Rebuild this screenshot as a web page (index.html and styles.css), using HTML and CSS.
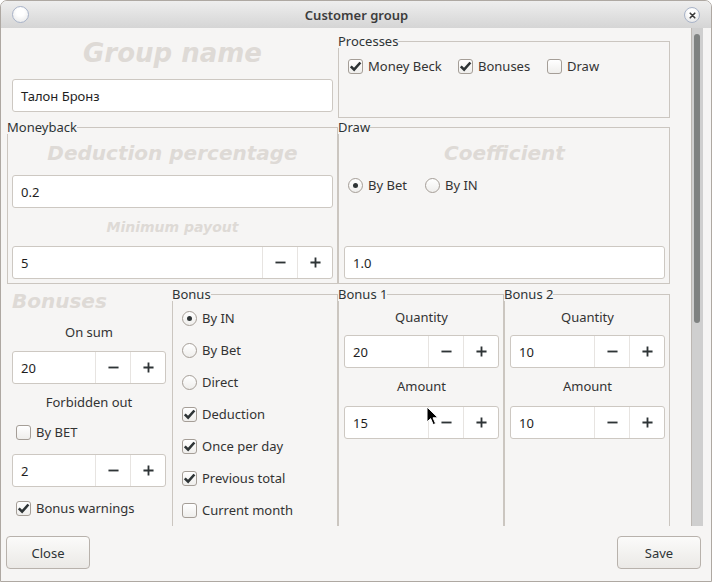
FILE: index.html
```html
<!DOCTYPE html>
<html>
<head>
<meta charset="utf-8">
<title>Customer group</title>
<link rel="stylesheet" href="styles.css">
</head>
<body>
<div class="window">
  <header class="titlebar">
    <span class="tb-dot"></span>
    <span class="tb-title">Customer group</span>
    <span class="tb-close"><svg width="16" height="16" viewBox="0 0 16 16"><path d="M5.2 5.2l5.6 5.6M10.8 5.2l-5.6 5.6" stroke="#3a3a3a" stroke-width="2" stroke-linecap="round"/></svg></span>
  </header>

  <div class="main">
    <div class="content">
      <div class="row row1">
        <div class="namecell">
          <div class="big big-lg">Group name</div>
          <div class="field">Талон Бронз</div>
        </div>
        <fieldset class="box processes">
          <legend>Processes</legend>
          <div class="proc-items">
            <div class="opt"><span class="cb"><svg width="13" height="13" viewBox="0 0 13 13"><path d="M1.8 6.4l3.3 3.3 6.3-7.2" fill="none" stroke="#2e3436" stroke-width="2.6"/></svg></span>Money Beck</div>
            <div class="opt"><span class="cb"><svg width="13" height="13" viewBox="0 0 13 13"><path d="M1.8 6.4l3.3 3.3 6.3-7.2" fill="none" stroke="#2e3436" stroke-width="2.6"/></svg></span>Bonuses</div>
            <div class="opt"><span class="cb"></span>Draw</div>
          </div>
        </fieldset>
      </div>

      <div class="row row2">
        <fieldset class="box moneyback">
          <legend>Moneyback</legend>
          <div class="mb-body">
            <div class="big big-md">Deduction percentage</div>
            <div class="field">0.2</div>
            <div class="big big-sm">Minimum payout</div>
            <div class="spin">
              <span class="val">5</span>
              <span class="sbtn"><svg width="12" height="12" viewBox="0 0 12 12"><path d="M0.5 6h11" stroke="#2e3436" stroke-width="2"/></svg></span>
              <span class="sbtn"><svg width="12" height="12" viewBox="0 0 12 12"><path d="M0.5 6h11M6 0.5v11" stroke="#2e3436" stroke-width="2"/></svg></span>
            </div>
          </div>
        </fieldset>
        <fieldset class="box draw">
          <legend>Draw</legend>
          <div class="draw-body">
            <div class="big big-md">Coefficient</div>
            <div class="radio-row">
              <div class="opt"><span class="rb on"></span>By Bet</div>
              <div class="opt"><span class="rb"></span>By IN</div>
            </div>
            <div class="field">1.0</div>
          </div>
        </fieldset>
      </div>

      <div class="row row3">
        <div class="bonuses">
          <div class="big big-md big-left">Bonuses</div>
          <div class="lbl lbl-a">On sum</div>
          <div class="spin spin-a">
            <span class="val">20</span>
            <span class="sbtn"><svg width="12" height="12" viewBox="0 0 12 12"><path d="M0.5 6h11" stroke="#2e3436" stroke-width="2"/></svg></span>
            <span class="sbtn"><svg width="12" height="12" viewBox="0 0 12 12"><path d="M0.5 6h11M6 0.5v11" stroke="#2e3436" stroke-width="2"/></svg></span>
          </div>
          <div class="lbl lbl-b">Forbidden out</div>
          <div class="opt opt-b"><span class="cb"></span>By BET</div>
          <div class="spin spin-b">
            <span class="val">2</span>
            <span class="sbtn"><svg width="12" height="12" viewBox="0 0 12 12"><path d="M0.5 6h11" stroke="#2e3436" stroke-width="2"/></svg></span>
            <span class="sbtn"><svg width="12" height="12" viewBox="0 0 12 12"><path d="M0.5 6h11M6 0.5v11" stroke="#2e3436" stroke-width="2"/></svg></span>
          </div>
          <div class="opt opt-b"><span class="cb"><svg width="13" height="13" viewBox="0 0 13 13"><path d="M1.8 6.4l3.3 3.3 6.3-7.2" fill="none" stroke="#2e3436" stroke-width="2.6"/></svg></span>Bonus warnings</div>
        </div>

        <fieldset class="box tall">
          <legend>Bonus</legend>
          <div class="bonus-body">
            <div class="opt"><span class="rb on"></span>By IN</div>
            <div class="opt"><span class="rb"></span>By Bet</div>
            <div class="opt"><span class="rb"></span>Direct</div>
            <div class="opt"><span class="cb"><svg width="13" height="13" viewBox="0 0 13 13"><path d="M1.8 6.4l3.3 3.3 6.3-7.2" fill="none" stroke="#2e3436" stroke-width="2.6"/></svg></span>Deduction</div>
            <div class="opt"><span class="cb"><svg width="13" height="13" viewBox="0 0 13 13"><path d="M1.8 6.4l3.3 3.3 6.3-7.2" fill="none" stroke="#2e3436" stroke-width="2.6"/></svg></span>Once per day</div>
            <div class="opt"><span class="cb"><svg width="13" height="13" viewBox="0 0 13 13"><path d="M1.8 6.4l3.3 3.3 6.3-7.2" fill="none" stroke="#2e3436" stroke-width="2.6"/></svg></span>Previous total</div>
            <div class="opt"><span class="cb"></span>Current month</div>
          </div>
        </fieldset>

        <fieldset class="box tall">
          <legend>Bonus 1</legend>
          <div class="bn-body">
            <div class="lbl lbl-q">Quantity</div>
            <div class="spin spin-q">
              <span class="val">20</span>
              <span class="sbtn"><svg width="12" height="12" viewBox="0 0 12 12"><path d="M0.5 6h11" stroke="#2e3436" stroke-width="2"/></svg></span>
              <span class="sbtn"><svg width="12" height="12" viewBox="0 0 12 12"><path d="M0.5 6h11M6 0.5v11" stroke="#2e3436" stroke-width="2"/></svg></span>
            </div>
            <div class="lbl lbl-am">Amount</div>
            <div class="spin spin-am">
              <span class="val">15</span>
              <span class="sbtn"><svg width="12" height="12" viewBox="0 0 12 12"><path d="M0.5 6h11" stroke="#2e3436" stroke-width="2"/></svg></span>
              <span class="sbtn"><svg width="12" height="12" viewBox="0 0 12 12"><path d="M0.5 6h11M6 0.5v11" stroke="#2e3436" stroke-width="2"/></svg></span>
            </div>
          </div>
        </fieldset>

        <fieldset class="box tall">
          <legend>Bonus 2</legend>
          <div class="bn-body">
            <div class="lbl lbl-q">Quantity</div>
            <div class="spin spin-q">
              <span class="val">10</span>
              <span class="sbtn"><svg width="12" height="12" viewBox="0 0 12 12"><path d="M0.5 6h11" stroke="#2e3436" stroke-width="2"/></svg></span>
              <span class="sbtn"><svg width="12" height="12" viewBox="0 0 12 12"><path d="M0.5 6h11M6 0.5v11" stroke="#2e3436" stroke-width="2"/></svg></span>
            </div>
            <div class="lbl lbl-am">Amount</div>
            <div class="spin spin-am">
              <span class="val">10</span>
              <span class="sbtn"><svg width="12" height="12" viewBox="0 0 12 12"><path d="M0.5 6h11" stroke="#2e3436" stroke-width="2"/></svg></span>
              <span class="sbtn"><svg width="12" height="12" viewBox="0 0 12 12"><path d="M0.5 6h11M6 0.5v11" stroke="#2e3436" stroke-width="2"/></svg></span>
            </div>
          </div>
        </fieldset>
      </div>
    </div>
    <div class="scrollbar"><div class="thumb"></div></div>
  </div>

  <footer class="footer">
    <button class="btn">Close</button>
    <button class="btn">Save</button>
  </footer>

  <svg class="cursor" width="13" height="20" viewBox="0 0 13 20"><path d="M1 1v15l3.6-3.4 2.6 6 2.4-1-2.6-5.8h5z" fill="#000" stroke="#fff" stroke-width="1"/></svg>
</div>
</body>
</html>
```

FILE: styles.css
```css
* { box-sizing: border-box; }
html, body { margin: 0; padding: 0; }
body {
  width: 712px;
  height: 582px;
  background: #ffffff;
  font-family: "Noto Sans", "Open Sans", sans-serif;
  font-size: 13px;
  color: #333333;
  overflow: hidden;
}

.window {
  position: relative;
  width: 712px;
  height: 582px;
  border: 1px solid #aea8a2;
  border-radius: 7px 7px 0 0;
  background: #f6f5f4;
  display: flex;
  flex-direction: column;
  overflow: hidden;
}

/* title bar */
.titlebar {
  height: 27px;
  flex: none;
  display: flex;
  align-items: center;
  background: linear-gradient(#eeeeee, #d5d5d5);
  padding: 0 11px 0 11px;
}
.tb-dot {
  width: 17px;
  height: 17px;
  border-radius: 50%;
  border: 1.5px solid #a8b3c8;
  background: radial-gradient(circle at 50% 35%, #ffffff 30%, #e4e4e4 100%);
}
.tb-title {
  flex: 1;
  text-align: center;
  font-weight: 600;
  font-size: 13px;
  color: #3c3c3c;
}
.tb-close {
  width: 16px;
  height: 16px;
  border-radius: 50%;
  border: 1.5px solid #a8b3c8;
  background: radial-gradient(circle at 50% 35%, #ffffff 30%, #dedede 100%);
  display: flex;
  align-items: center;
  justify-content: center;
  margin-top: 1px;
}
.tb-close svg { width: 13px; height: 13px; }

/* main area */
.main {
  display: flex;
  height: 498px;
  flex: none;
}
.content {
  width: 690px;
  height: 498px;
  overflow: hidden;
  flex: none;
}
.scrollbar {
  width: 12px;
  flex: none;
  background: #cfcfcf;
  border-left: 1px solid #bcb7b2;
  padding: 6px 2px 0 2px;
}
.thumb {
  width: 6px;
  height: 289px;
  border-radius: 3px;
  background: #7f8281;
}

/* generic widgets */
.row { display: grid; }
.box {
  border: 1px solid #cbc6c0;
  margin: 0;
  padding: 0;
  min-width: 0;
}
legend {
  padding: 0;
  margin-left: -1px;
  font-size: 13px;
  line-height: 14px;
  color: #2e3436;
}
.big {
  font-family: "DejaVu Sans", "Liberation Sans", sans-serif;
  font-weight: bold;
  font-style: italic;
  color: #dedad6;
  text-align: center;
  white-space: nowrap;
}
.big-lg { font-size: 26px; line-height: 30px; }
.big-md { font-size: 20px; line-height: 24px; }
.big-sm { font-size: 14px; line-height: 18px; }

.field {
  height: 33px;
  background: #ffffff;
  border: 1px solid #cdc8c2;
  border-radius: 3px;
  padding: 0 8px;
  display: flex;
  align-items: center;
  color: #1e1e1e;
  flex: none;
}
.spin {
  height: 33px;
  background: #ffffff;
  border: 1px solid #cdc8c2;
  border-radius: 3px;
  display: flex;
  flex: none;
  color: #1e1e1e;
}
.spin .val {
  flex: 1;
  padding-left: 8px;
  display: flex;
  align-items: center;
}
.spin .sbtn {
  width: 35px;
  border-left: 1px solid #e7e4e1;
  display: flex;
  align-items: center;
  justify-content: center;
}
.spin .sbtn svg { width: 11px; height: 11px; }

.opt {
  display: flex;
  align-items: center;
  gap: 5px;
  height: 17px;
  line-height: 17px;
  white-space: nowrap;
  color: #333333;
}
.cb {
  width: 15px;
  height: 15px;
  flex: none;
  border: 1px solid #a59e97;
  border-radius: 3px;
  background: linear-gradient(#ffffff, #efeeec);
  display: flex;
  align-items: center;
  justify-content: center;
}
.rb {
  width: 15px;
  height: 15px;
  flex: none;
  border: 1px solid #a59e97;
  border-radius: 50%;
  background: linear-gradient(#ffffff, #efeeec);
  display: flex;
  align-items: center;
  justify-content: center;
}
.rb.on::after {
  content: "";
  width: 5px;
  height: 5px;
  border-radius: 50%;
  background: #2e3436;
}
.lbl {
  text-align: center;
  line-height: 17px;
  color: #333333;
}

/* row 1 */
.row1 {
  grid-template-columns: 337px 332px;
  height: 92px;
}
.namecell {
  padding: 10px 5px 0 11px;
  display: flex;
  flex-direction: column;
}
.namecell .field { margin-top: 11px; }
.processes { margin: 6px 0 2px 0; }
.proc-items {
  display: grid;
  grid-template-columns: 110px 89px auto;
  padding: 10px 0 0 9px;
}

/* row 2 */
.row2 {
  grid-template-columns: 337px 332px;
  height: 165px;
}
.moneyback { margin: 0 0 1px 6px; }
.draw { margin: 0 0 1px 0; }
.mb-body {
  padding: 0 4px;
  display: flex;
  flex-direction: column;
}
.mb-body .big-md { margin-top: 7px; }
.mb-body .field { margin-top: 10px; }
.mb-body .big-sm { margin-top: 10px; }
.mb-body .spin { margin-top: 10px; }
.draw-body {
  padding: 0 4px 0 5px;
  display: flex;
  flex-direction: column;
}
.draw-body .big-md { margin-top: 7px; }
.radio-row {
  display: grid;
  grid-template-columns: 77px auto;
  margin-top: 12px;
  padding-left: 4px;
}
.draw-body .field { margin-top: 52px; }

/* row 3 */
.row3 {
  grid-template-columns: 171px 166px 166px 166px;
  height: 262px;
}
.bonuses {
  padding: 4px 6px 0 11px;
  display: flex;
  flex-direction: column;
}
.big-left { text-align: left; }
.lbl-a { margin-top: 11px; }
.spin-a { margin-top: 10px; }
.lbl-b { margin-top: 10px; }
.opt-b { margin: 13px 0 0 4px; }
.spin-b { margin-top: 13px; }
.tall { margin: 2px 0 0 0; }
.bonus-body {
  padding: 9px 0 0 9px;
  display: flex;
  flex-direction: column;
  gap: 15px;
}
.bn-body {
  padding: 0 4px 0 5px;
  display: flex;
  flex-direction: column;
}
.lbl-q { margin-top: 8px; }
.spin-q { margin-top: 9px; }
.lbl-am { margin-top: 10px; }
.spin-am { margin-top: 11px; }

/* footer */
.footer {
  flex: 1;
  display: flex;
  justify-content: space-between;
  align-items: flex-start;
  padding: 10px 10px 0 5px;
}
.btn {
  width: 84px;
  height: 33px;
  border: 1px solid #b8b2ac;
  border-radius: 4px;
  background: linear-gradient(#fbfbfa, #ebe9e6);
  font-family: "Noto Sans", "Open Sans", sans-serif;
  font-size: 13px;
  color: #2e3436;
  padding: 0;
}

/* mouse pointer lying over the Bonus 1 amount field */
.cursor {
  position: absolute;
  left: 425px;
  top: 405px;
}
```
